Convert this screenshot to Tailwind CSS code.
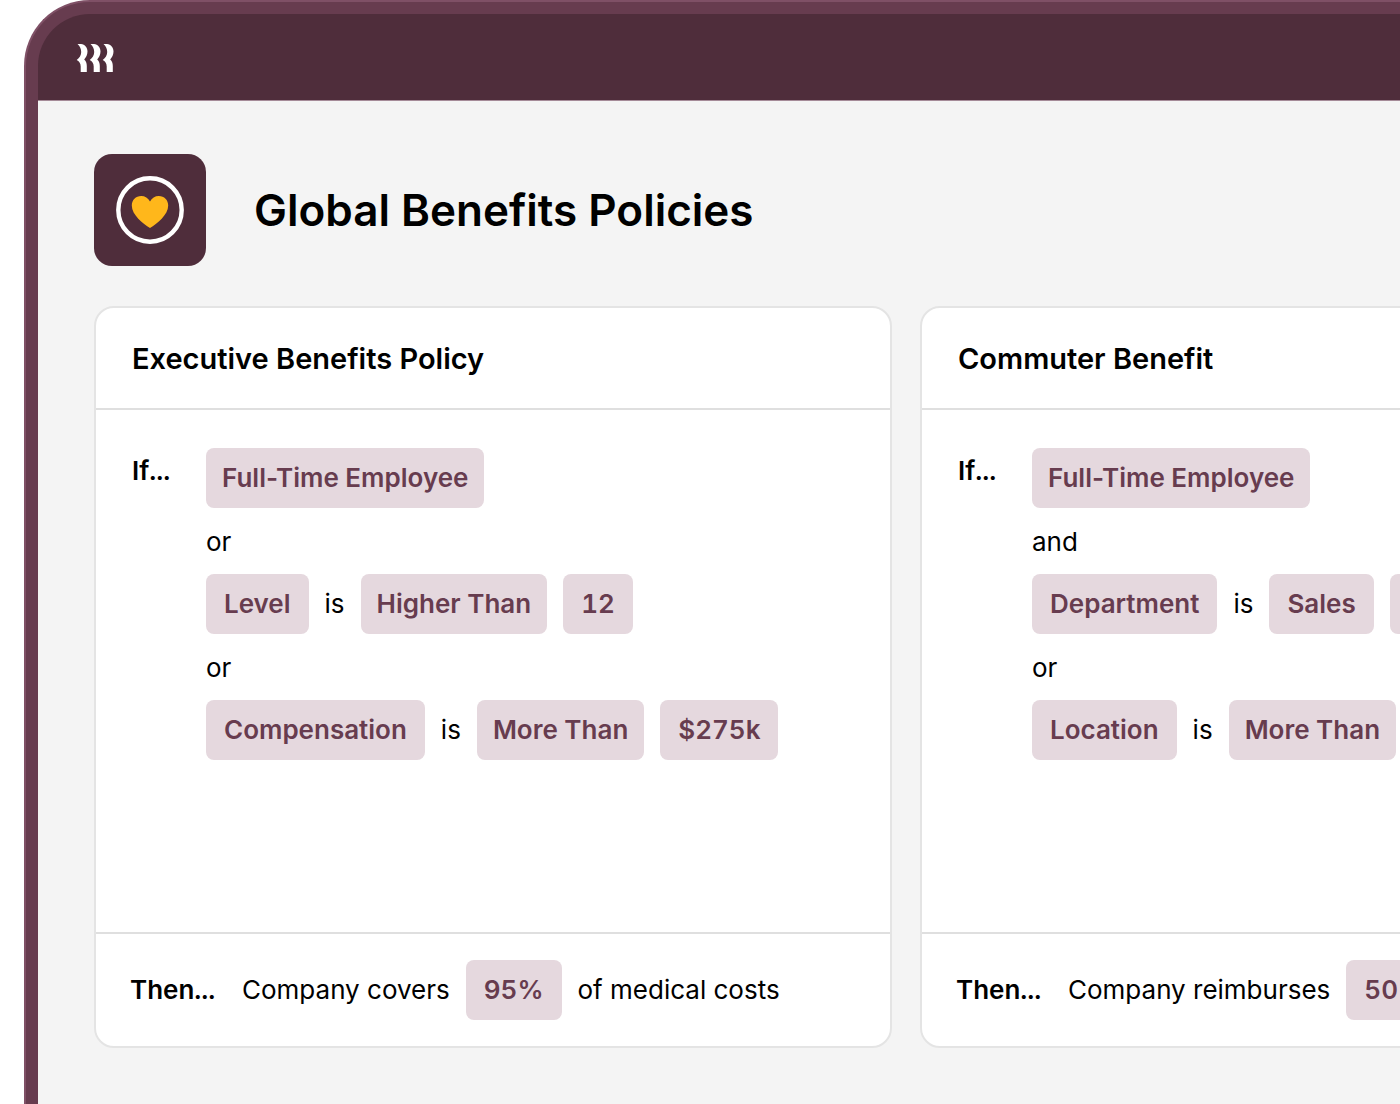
<!DOCTYPE html>
<html lang="en">
<head>
    <meta charset="UTF-8">
    <meta name="viewport" content="width=device-width, initial-scale=1.0">
    <title>Global Benefits Policies</title>
    <script src="https://cdn.jsdelivr.net/npm/@tailwindcss/browser@4"></script>
</head>
<body class="bg-white text-black font-['Inter','Liberation_Sans',sans-serif] overflow-hidden">
    <!-- Device frame -->
    <div class="ml-6 min-h-screen flex rounded-tl-[66px] border-t-2 border-l-2 border-[#7f5066] bg-[#673c4f] pt-3 pl-3">
        <div class="flex-1 min-w-0 flex flex-col">
            <!-- Top bar -->
            <header class="h-[86px] flex items-center rounded-tl-[52px] bg-[#4f2d3b] px-[38px]">
                <svg class="w-[40px] h-[30px]" viewBox="0 0 40 30" fill="#fff" role="img" aria-label="Logo">
                    <path id="wave" d="M1.500 2H5C9 2.500 11.500 5.500 11.500 9.500C11.500 12.500 10 15.500 8.200 17.500C10 19 10.800 21 10.800 24V30H4.700V24.500C4.700 21.500 3 19 .700 18C3.500 16 5.200 13 5.200 10C5.200 7 4 4 1.500 2Z"/>
                    <use href="#wave" x="13"/>
                    <use href="#wave" x="26"/>
                </svg>
            </header>

            <main class="flex-1 overflow-hidden border-t border-[#a58b98] bg-[#f4f4f4] px-14 pt-[53px] pb-14">
                <!-- Page title -->
                <div class="flex items-center gap-12 mb-10">
                    <div class="size-28 shrink-0 rounded-[18px] bg-[#4f2d3b]">
                        <svg class="size-28" viewBox="0 0 112 112" aria-hidden="true">
                            <circle cx="56" cy="56" r="31.700" fill="none" stroke="#fff" stroke-width="4.400"/>
                            <path d="M56 74C49 69.500 37.800 61 37.800 51.500C37.800 46 41.800 42 47.200 42C51 42 54.200 44 56 47.500C57.800 44 61 42 64.800 42C70.200 42 74.200 46 74.200 51.500C74.200 61 63 69.500 56 74Z" fill="#ffb71b"/>
                        </svg>
                    </div>
                    <h1 class="text-[44px] leading-[56px] font-semibold whitespace-nowrap">Global Benefits Policies</h1>
                </div>

                <!-- Policy cards -->
                <div class="flex gap-7 text-[26px] leading-8 whitespace-nowrap">
                    <section class="w-[798px] shrink-0 flex flex-col rounded-[20px] border-2 border-[#e4e4e4] bg-white">
                        <h2 class="px-9 pt-[33px] pb-[31px] text-[29px] leading-9 font-semibold">Executive Benefits Policy</h2>
                        <div class="min-h-[526px] flex border-y-2 border-[#dfdfdf] px-9 pt-[38px]">
                            <div class="w-[74px] shrink-0 pt-[7px] font-semibold tabular-nums">If...</div>
                            <div>
                                <div class="flex items-center gap-4">
                                    <span class="rounded-lg bg-[#e5d8de] px-4 py-[14px] font-semibold text-[#673c4f]">Full-Time Employee</span>
                                </div>
                                <div class="pt-[18px] pb-4">or</div>
                                <div class="flex items-center gap-4">
                                    <span class="rounded-lg bg-[#e5d8de] px-[18px] py-[14px] font-semibold text-[#673c4f]">Level</span>
                                    <span>is</span>
                                    <span class="rounded-lg bg-[#e5d8de] px-4 py-[14px] font-semibold text-[#673c4f]">Higher Than</span>
                                    <span class="rounded-lg bg-[#e5d8de] px-[18px] py-[14px] font-semibold text-[#673c4f] tabular-nums">12</span>
                                </div>
                                <div class="pt-[18px] pb-4">or</div>
                                <div class="flex items-center gap-4">
                                    <span class="rounded-lg bg-[#e5d8de] px-[18px] py-[14px] font-semibold text-[#673c4f]">Compensation</span>
                                    <span>is</span>
                                    <span class="rounded-lg bg-[#e5d8de] px-4 py-[14px] font-semibold text-[#673c4f]">More Than</span>
                                    <span class="rounded-lg bg-[#e5d8de] px-[18px] py-[14px] font-semibold text-[#673c4f] tabular-nums">$275k</span>
                                </div>
                            </div>
                        </div>
                        <div class="flex items-center gap-4 px-[34px] py-[26px]">
                            <span class="w-24 font-semibold tabular-nums">Then...</span>
                            <span>Company covers</span>
                            <span class="rounded-lg bg-[#e5d8de] px-[18px] py-[14px] font-semibold text-[#673c4f] tabular-nums">95%</span>
                            <span>of medical costs</span>
                        </div>
                    </section>

                    <section class="w-[798px] shrink-0 flex flex-col rounded-[20px] border-2 border-[#e4e4e4] bg-white">
                        <h2 class="px-9 pt-[33px] pb-[31px] text-[29px] leading-9 font-semibold">Commuter Benefit</h2>
                        <div class="min-h-[526px] flex border-y-2 border-[#dfdfdf] px-9 pt-[38px]">
                            <div class="w-[74px] shrink-0 pt-[7px] font-semibold tabular-nums">If...</div>
                            <div>
                                <div class="flex items-center gap-4">
                                    <span class="rounded-lg bg-[#e5d8de] px-4 py-[14px] font-semibold text-[#673c4f]">Full-Time Employee</span>
                                </div>
                                <div class="pt-[18px] pb-4">and</div>
                                <div class="flex items-center gap-4">
                                    <span class="rounded-lg bg-[#e5d8de] px-[18px] py-[14px] font-semibold text-[#673c4f]">Department</span>
                                    <span>is</span>
                                    <span class="rounded-lg bg-[#e5d8de] px-[18px] py-[14px] font-semibold text-[#673c4f]">Sales</span>
                                    <span class="h-[60px] w-24 rounded-lg bg-[#e5d8de]"></span>
                                </div>
                                <div class="pt-[18px] pb-4">or</div>
                                <div class="flex items-center gap-4">
                                    <span class="rounded-lg bg-[#e5d8de] px-[18px] py-[14px] font-semibold text-[#673c4f]">Location</span>
                                    <span>is</span>
                                    <span class="rounded-lg bg-[#e5d8de] px-4 py-[14px] font-semibold text-[#673c4f]">More Than</span>
                                </div>
                            </div>
                        </div>
                        <div class="flex items-center gap-4 px-[34px] py-[26px]">
                            <span class="w-24 font-semibold tabular-nums">Then...</span>
                            <span>Company reimburses</span>
                            <span class="rounded-lg bg-[#e5d8de] px-[18px] py-[14px] font-semibold text-[#673c4f] tabular-nums">50%</span>
                        </div>
                    </section>
                </div>
            </main>
        </div>
    </div>
</body>
</html>
